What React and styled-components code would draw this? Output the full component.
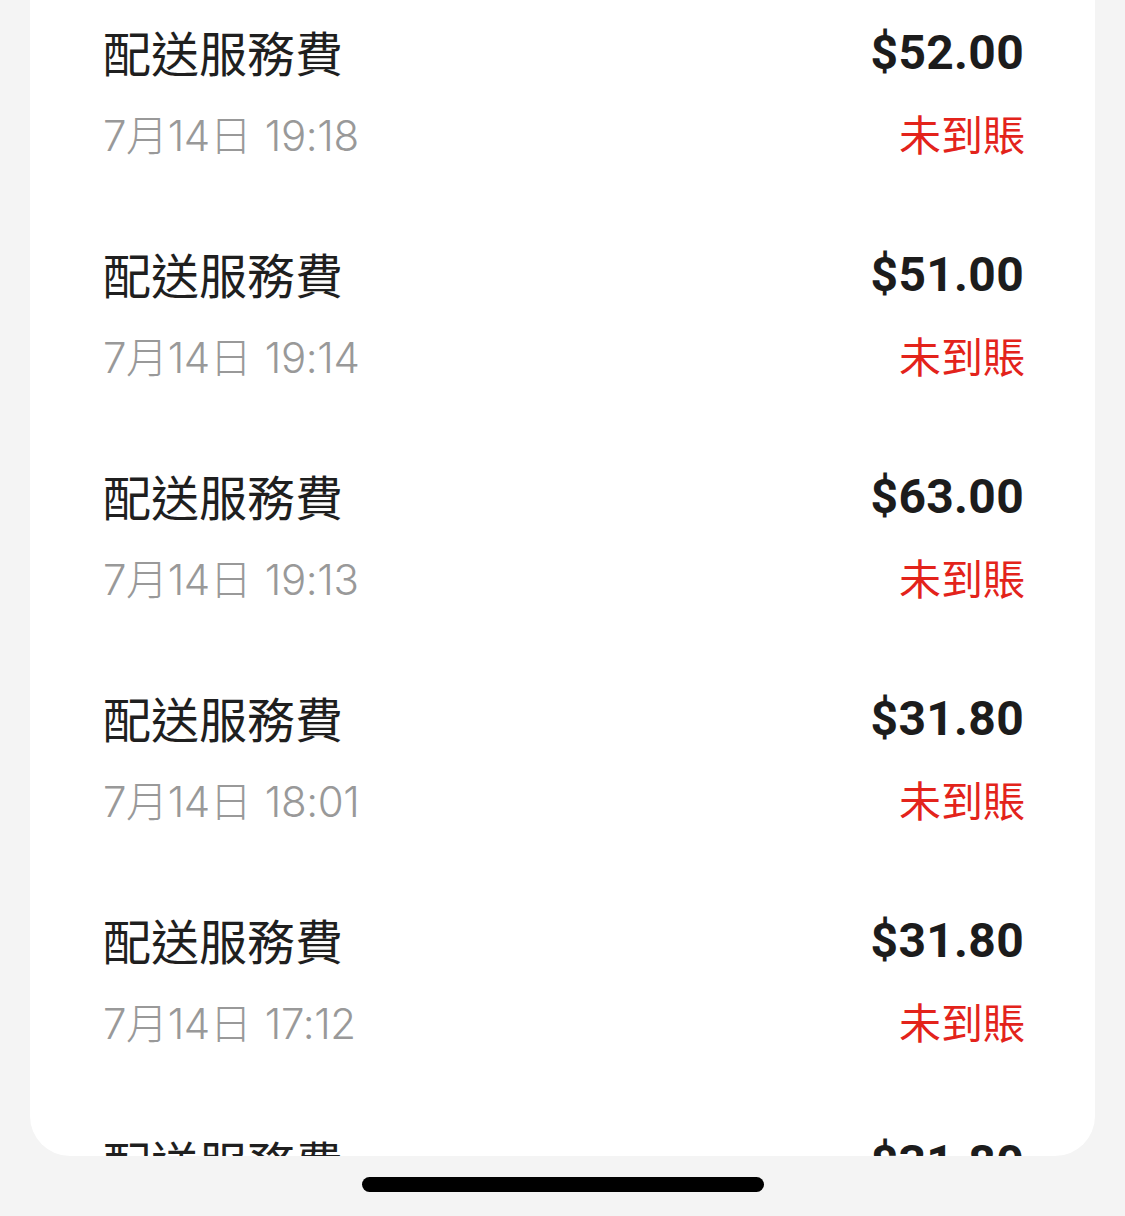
import React from 'react';
import styled, { createGlobalStyle } from 'styled-components';

const GlobalStyle = createGlobalStyle`
  html, body {
    margin: 0;
    padding: 0;
    background: #f4f4f4;
  }
  body {
    font-family: "Noto Sans CJK TC", "Noto Sans", sans-serif;
    -webkit-font-smoothing: antialiased;
  }
`;

const Screen = styled.div`
  display: flex;
  flex-direction: column;
  width: 1125px;
  height: 1216px;
  overflow: hidden;
  background: #f4f4f4;
`;

const Card = styled.div`
  height: 1156px;
  margin: 0 30px;
  overflow: hidden;
  background: #fff;
  border-radius: 0 0 40px 40px;
`;

const List = styled.ul`
  list-style: none;
  margin: -7px 0 0;
  padding: 0;
`;

const Row = styled.li`
  display: grid;
  grid-template-columns: 1fr auto;
  grid-template-rows: 60px 60px;
  row-gap: 23px;
  padding: 30px 70px 49px 73px;
  align-items: center;
`;

const Title = styled.span`
  font-size: 48px;
  line-height: 56px;
  margin-bottom: 4px;
  color: #1f1f1f;
`;

const Amount = styled.span`
  justify-self: end;
  font-family: Roboto, "Liberation Sans", sans-serif;
  font-weight: 700;
  font-size: 48px;
  line-height: 60px;
  letter-spacing: 0.3px;
  color: #1c1c1c;
  margin-right: 1px;
`;

const When = styled.span`
  font-family: Inter, "Noto Sans CJK TC", sans-serif;
  font-weight: 300;
  font-size: 42px;
  line-height: 60px;
  color: #999;
  letter-spacing: -0.4px;
  word-spacing: 2px;
`;

const Status = styled.span`
  justify-self: end;
  font-size: 42px;
  line-height: 54px;
  margin-bottom: 6px;
  color: ${({ tone }) => (tone === 'pending' ? '#e3231b' : '#1f1f1f')};
`;

const HomeArea = styled.div`
  flex: 1;
  display: flex;
  justify-content: center;
  padding-top: 21px;
`;

const HomeBar = styled.div`
  width: 402px;
  height: 15px;
  border-radius: 8px;
  background: #000;
`;

const records = [
  { amount: '$52.00', time: '7月14日 19:18' },
  { amount: '$51.00', time: '7月14日 19:14' },
  { amount: '$63.00', time: '7月14日 19:13' },
  { amount: '$31.80', time: '7月14日 18:01' },
  { amount: '$31.80', time: '7月14日 17:12' },
  { amount: '$31.80', time: '7月14日 17:05' },
];

export default function App() {
  return (
    <Screen>
      <GlobalStyle />
      <Card>
        <List>
          {records.map((r, i) => (
            <Row key={i}>
              <Title>配送服務費</Title>
              <Amount>{r.amount}</Amount>
              <When>{r.time}</When>
              <Status tone="pending">未到賬</Status>
            </Row>
          ))}
        </List>
      </Card>
      <HomeArea>
        <HomeBar />
      </HomeArea>
    </Screen>
  );
}
